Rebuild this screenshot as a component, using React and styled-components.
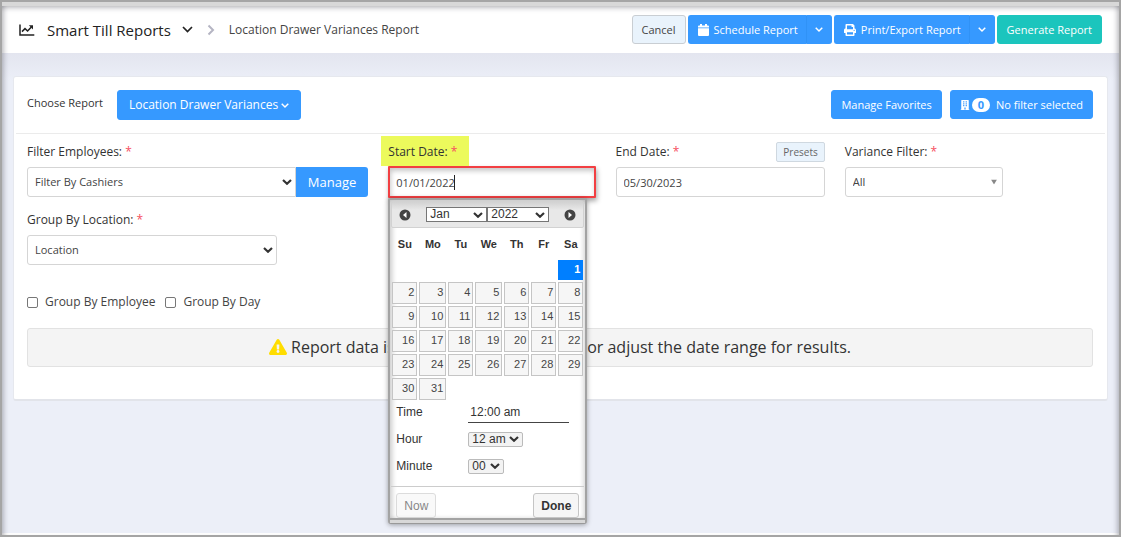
import React from "react";
import styled, { createGlobalStyle, css } from "styled-components";
import { FaPrint, FaBuilding, FaExclamationTriangle } from "react-icons/fa";

const GlobalStyle = createGlobalStyle`
  *, *::before, *::after { box-sizing: border-box; }
  body {
    margin: 0;
    font-family: "Open Sans", sans-serif;
    font-size: 12px;
    line-height: 20px;
    color: #333;
    background: #fff;
  }
  button, input, select { font: inherit; color: inherit; margin: 0; }
`;

const Page = styled.div`
  position: relative;
  display: flex;
  flex-direction: column;
  min-height: 100vh;
  padding-bottom: 2px;
  border: 2px solid #a5a5a5;
  background: #fff;
  &::after {
    content: "";
    position: absolute;
    inset: 4px 0 0;
    box-shadow:
      inset 6px 0 5px -4px rgba(90, 90, 100, 0.4),
      inset -6px 0 5px -4px rgba(90, 90, 100, 0.4),
      inset 0 6px 5px -4px rgba(90, 90, 100, 0.4);
    pointer-events: none;
  }
`;

const Header = styled.header`
  display: flex;
  align-items: center;
  justify-content: space-between;
  height: 51px;
  padding: 0 17px 0 17px;
  border-top: 4px solid #d8d8d8;
  background: #fff;
`;

const Trail = styled.nav`
  display: flex;
  align-items: center;
`;

const Title = styled.h1`
  margin: 0 11px 0 12px;
  font-size: 15px;
  font-weight: 400;
  color: #222;
`;

const Crumb = styled.span`
  display: flex;
  margin-left: 14px;
  color: #444;
`;

const Actions = styled.div`
  display: flex;
  gap: ${(p) => p.$gap || 2}px;
`;

const tones = {
  blue: css`background: #3699ff; border-color: #3699ff; color: #fff;`,
  teal: css`background: #1bc5bd; border-color: #1bc5bd; color: #fff;`,
  pale: css`background: #e9f3fc; border-color: #c9ced3; color: #444;`,
};

const Button = styled.button`
  display: inline-flex;
  align-items: center;
  justify-content: center;
  height: ${(p) => (p.$large ? 30 : 29)}px;
  padding: 0 ${(p) => (p.$large ? 11 : 9)}px;
  border: 1px solid;
  border-radius: 3px;
  font-size: ${(p) => (p.$large ? 12 : 11)}px;
  white-space: nowrap;
  cursor: pointer;
  ${(p) => tones[p.$tone || "blue"]}
`;

const Split = styled.div`
  display: flex;
  ${Button}:first-child { border-radius: 3px 0 0 3px; border-right: 0; gap: 5px; padding-right: 8px; }
  ${Button}:last-child { border-radius: 0 3px 3px 0; border-left-color: #3092f6; padding: 0 8px; }
`;

const Main = styled.main`
  flex: 1;
  padding: 23px 11px;
  background: linear-gradient(#e3e5ef, #eceff8 28px);
`;

const Card = styled.section`
  padding-bottom: 32px;
  border: 1px solid #e6e8ee;
  border-bottom: 2px solid #e2e4ea;
  border-radius: 3px;
  background: #fff;
`;

const ChooseRow = styled.div`
  display: flex;
  align-items: flex-start;
  justify-content: space-between;
  margin: 0 2px;
  padding: 13px 12px 13px 11px;
  border-bottom: 1px solid #ebebeb;
`;

const Choose = styled.div`
  display: flex;
  align-items: center;
  gap: 14px;
`;

const ChooseLabel = styled.span`
  margin-bottom: 4px;
  font-size: 11px;
`;

const Count = styled.span`
  margin: 0 6px 0 2px;
  padding: 0 6px;
  border-radius: 7px;
  background: #fff;
  color: #3699ff;
  font-size: 11px;
  font-weight: 700;
  line-height: 14px;
`;

const Filters = styled.form`
  padding: 8px 14px 0 13px;
`;

const FieldGrid = styled.div`
  display: grid;
  grid-template-columns: 341fr 207fr 209fr 248fr;
  gap: 13px 20px;
`;

const Field = styled.div`
  position: relative;
  min-width: 0;
  max-width: ${(p) => p.$max || "none"};
`;

const LabelRow = styled.div`
  display: flex;
  align-items: center;
  justify-content: space-between;
  height: 20px;
  margin-bottom: 5px;
`;

const Label = styled.label`
  position: relative;
  z-index: 0;
  font-size: 12px;
  &::after { content: " *"; color: #f64e60; }
  ${(p) => p.$marked && css`
    &::before {
      content: "";
      position: absolute;
      z-index: -1;
      inset: -6px -12px -4px -7px;
      background: #ecfa5c;
    }
  `}
`;

const Presets = styled.button`
  height: 20px;
  padding: 0 6px;
  border: 1px solid #cfd8e0;
  border-radius: 2px;
  background: #e9f3fc;
  color: #666;
  font-size: 10px;
  line-height: 16px;
`;

const control = css`
  width: 100%;
  height: 30px;
  padding: 0 7px;
  border: 1px solid #d5d5d5;
  border-radius: 3px;
  background: #fff;
  color: #444;
  font-size: 11px;
`;

const TextInput = styled.input`
  ${control}
  outline: 0;
  ${(p) => p.$active && css`
    height: 32px;
    margin: -1px 0;
    padding: 0 6px;
    border: 2px solid #f23f42;
    border-radius: 1px;
    box-shadow: 1px 3px 5px rgba(0, 0, 0, 0.35), inset 1px 3px 5px rgba(0, 0, 0, 0.22);
  `}
`;

const Caret = styled.span`
  position: absolute;
  left: 66px;
  top: 33px;
  width: 1px;
  height: 15px;
  background: #222;
`;

const SelectBox = styled.div`
  position: relative;
  flex: ${(p) => (p.$grow ? 1 : "none")};
  svg {
    position: absolute;
    right: ${(p) => p.$inset || 4}px;
    top: 50%;
    transform: translateY(-50%);
    pointer-events: none;
  }
`;

const Select = styled.select`
  ${control}
  appearance: none;
  border-radius: ${(p) => (p.$joined ? "3px 0 0 3px" : "3px")};
`;

const InputGroup = styled.div`
  display: flex;
`;

const Manage = styled.button`
  height: 30px;
  padding: 0 12px;
  border: 0;
  border-radius: 0 3px 3px 0;
  background: #3699ff;
  color: #fff;
  font-size: 13px;
`;

const Checks = styled.div`
  display: flex;
  gap: 10px;
  margin: 27px 0 16px;
`;

const Check = styled.label`
  display: flex;
  align-items: center;
  gap: 7px;
  color: #444;
  input {
    appearance: none;
    width: 11px;
    height: 11px;
    border: 1px solid #777;
    border-radius: 2px;
    background: #fff;
  }
`;

const Alert = styled.div`
  display: flex;
  align-items: center;
  justify-content: center;
  gap: 4px;
  height: 39px;
  padding-bottom: 2px;
  border: 1px solid #e2e2e2;
  border-radius: 3px;
  background: #f4f4f4;
  color: #333;
  font-size: 16px;
  white-space: nowrap;
`;

const Picker = styled.div`
  position: absolute;
  z-index: 2;
  top: 56px;
  left: 0;
  width: 199px;
  border: 2px solid #a3a3a3;
  border-bottom: 1px solid #999;
  border-radius: 2px 2px 3px 3px;
  background: #fff;
  box-shadow: 0 1px 5px rgba(0, 0, 0, 0.35);
  font-family: "Liberation Sans", sans-serif;
  color: #333;
`;

const PickerBody = styled.div`
  padding: 1px 1px 0;
  border-bottom: 2px solid #a3a3a3;
  box-shadow: inset 3px 3px 4px rgba(0, 0, 0, 0.16), inset -2px 0 4px rgba(0, 0, 0, 0.14);
`;

const PickerLip = styled.div`
  height: 3px;
  background: #d8d8d8;
`;

const PickerHead = styled.div`
  display: flex;
  align-items: center;
  justify-content: space-between;
  height: 27px;
  padding: 0 7px;
  border: 1px solid #d2d2d2;
  border-radius: 2px;
  background: linear-gradient(#d2d2d2, #e8e8e8 8px);
`;

const RoundButton = styled.button`
  display: grid;
  place-items: center;
  padding: 0;
  border: 0;
  background: none;
`;

const MonthYear = styled.div`
  display: flex;
`;

const MiniSelect = styled.select`
  appearance: none;
  display: block;
  width: ${(p) => p.$width}px;
  height: 15px;
  padding: 0 3px;
  border: 1px solid #767676;
  border-radius: ${(p) => (p.$round ? "2px" : "0")};
  background: #fff;
  font-size: 12px;
  line-height: 13px;
  ${(p) => p.$round && css`border-color: #bbb; background: #f3f3f3;`}
`;

const Calendar = styled.table`
  width: 100%;
  table-layout: fixed;
  border-collapse: collapse;
  font-size: 11px;
  th { height: 31px; padding: 0; line-height: 12px; }
  td { padding: 1px; }
`;

const Day = styled.button`
  display: block;
  width: 100%;
  height: ${(p) => (p.$on ? 20 : 22)}px;
  padding: 0 2px 2px 0;
  border: 1px solid ${(p) => (p.$on ? "#007fff" : "#c5c5c5")};
  background: ${(p) => (p.$on ? "#007fff" : "#f6f6f6")};
  color: ${(p) => (p.$on ? "#fff" : "#454545")};
  font-weight: ${(p) => (p.$on ? 700 : 400)};
  font-size: 11px;
  line-height: 16px;
  text-align: right;
`;

const TimeGrid = styled.div`
  display: grid;
  grid-template-columns: 64px 101px;
  column-gap: 8px;
  align-items: center;
  grid-template-rows: 22px 32px 22px;
  padding: 0 5px 9px;
  font-size: 12px;
`;

const TimeInput = styled.input`
  width: 100%;
  height: 22px;
  padding: 0 2px;
  border: 0;
  border-bottom: 1px solid #444;
  outline: 0;
  background: none;
`;

const PickerFoot = styled.div`
  display: flex;
  justify-content: space-between;
  padding: 6px 5px 0;
  border-top: 1px solid #ccc;
`;

const FootButton = styled.button`
  height: 25px;
  padding: 0 7px;
  border: 1px solid #c5c5c5;
  border-radius: 3px;
  background: #f6f6f6;
  font-size: 12px;
  font-weight: ${(p) => (p.$strong ? 700 : 400)};
  opacity: ${(p) => (p.disabled ? 0.6 : 1)};
`;

const Chevron = ({ width = 11, stroke = 2, color = "#333", right }) => (
  <svg
    width={right ? 8 : width}
    height={right ? 12 : 7}
    viewBox={right ? "0 0 8 12" : "0 0 11 7"}
    fill="none"
    stroke={color}
    strokeWidth={stroke}
    aria-hidden="true"
  >
    <path d={right ? "M1.5 1.5 6 6 1.5 10.5" : "M1 1 5.5 5.5 10 1"} />
  </svg>
);

const TrendIcon = () => (
  <svg width="16" height="12" viewBox="0 0 16 12" fill="none" stroke="#222" aria-hidden="true">
    <path d="M1 0.5V10.9H15.3" strokeWidth="1.5" />
    <path d="M3 7.6 6 4.6 8.6 7 12.4 3" strokeWidth="1.5" />
    <path d="M9.8 1.2H14V5.4z" fill="#222" stroke="none" />
  </svg>
);

const SelectArrow = () => (
  <svg width="10" height="7" viewBox="0 0 10 7" fill="none" stroke="#333" strokeWidth="2.2" aria-hidden="true">
    <path d="M1 1.5 5 5.2 9 1.5" />
  </svg>
);

const CalendarIcon = () => (
  <svg width="11" height="12" viewBox="0 0 11 12" fill="#fff" aria-hidden="true">
    <path d="M2 0h2v1.5h3V0h2v1.5h1a1 1 0 0 1 1 1V3.6H0V2.5a1 1 0 0 1 1-1h1zM0 4.2h11V11a1 1 0 0 1-1 1H1a1 1 0 0 1-1-1z" />
  </svg>
);

const ArrowDot = ({ next }) => (
  <svg width="12" height="12" viewBox="0 0 12 12" aria-hidden="true">
    <circle cx="6" cy="6" r="5.5" fill="#444" />
    <path d={next ? "M4.5 3v6L8 6z" : "M7.5 3v6L4 6z"} fill="#fff" />
  </svg>
);

const DropArrow = () => (
  <svg width="6" height="5" viewBox="0 0 6 5" aria-hidden="true">
    <path d="M0 0h6L3 5z" fill="#888" />
  </svg>
);

const weekdays = ["Su", "Mo", "Tu", "We", "Th", "Fr", "Sa"];
const columns = [27, 29, 27, 29, 27, 27, 27];
const weeks = [0, 1, 2, 3, 4, 5].map((w) =>
  weekdays.map((_, d) => w * 7 + d - 5).map((n) => (n >= 1 && n <= 31 ? n : null))
);

function DatePicker() {
  return (
    <Picker role="dialog" aria-label="Choose start date">
      <PickerBody>
        <PickerHead>
          <RoundButton type="button" aria-label="Previous month"><ArrowDot /></RoundButton>
          <MonthYear>
            <SelectBox>
              <MiniSelect $width={61} aria-label="Month"><option>Jan</option></MiniSelect>
              <SelectArrow />
            </SelectBox>
            <SelectBox>
              <MiniSelect $width={62} aria-label="Year"><option>2022</option></MiniSelect>
              <SelectArrow />
            </SelectBox>
          </MonthYear>
          <RoundButton type="button" aria-label="Next month"><ArrowDot next /></RoundButton>
        </PickerHead>
        <Calendar>
          <colgroup>{columns.map((w, i) => <col key={i} width={w} />)}</colgroup>
          <thead>
            <tr>{weekdays.map((d) => <th key={d} scope="col">{d}</th>)}</tr>
          </thead>
          <tbody>
            {weeks.map((week, w) => (
              <tr key={w}>
                {week.map((n, d) => (
                  <td key={d}>{n && <Day type="button" $on={n === 1}>{n}</Day>}</td>
                ))}
              </tr>
            ))}
          </tbody>
        </Calendar>
        <TimeGrid>
          <label htmlFor="time">Time</label>
          <TimeInput id="time" defaultValue="12:00 am" />
          <label htmlFor="hour">Hour</label>
          <MonthYear>
            <SelectBox>
              <MiniSelect id="hour" $round $width={55}><option>12 am</option></MiniSelect>
              <SelectArrow />
            </SelectBox>
          </MonthYear>
          <label htmlFor="minute">Minute</label>
          <MonthYear>
            <SelectBox>
              <MiniSelect id="minute" $round $width={36}><option>00</option></MiniSelect>
              <SelectArrow />
            </SelectBox>
          </MonthYear>
        </TimeGrid>
        <PickerFoot>
          <FootButton type="button" disabled>Now</FootButton>
          <FootButton type="button" $strong>Done</FootButton>
        </PickerFoot>
      </PickerBody>
      <PickerLip />
    </Picker>
  );
}

export default function App() {
  return (
    <>
      <GlobalStyle />
      <Page>
        <Header>
          <Trail aria-label="Breadcrumb">
            <TrendIcon />
            <Title>Smart Till Reports</Title>
            <Chevron color="#222" stroke={1.7} />
            <Crumb><Chevron right color="#b5b5c3" /></Crumb>
            <Crumb>Location Drawer Variances Report</Crumb>
          </Trail>
          <Actions>
            <Button type="button" $tone="pale">Cancel</Button>
            <Split>
              <Button type="button"><CalendarIcon />Schedule Report</Button>
              <Button type="button" aria-label="Schedule options"><Chevron width={8} color="#fff" /></Button>
            </Split>
            <Split>
              <Button type="button"><FaPrint size={12} aria-hidden="true" />Print/Export Report</Button>
              <Button type="button" aria-label="Export options"><Chevron width={8} color="#fff" /></Button>
            </Split>
            <Button type="button" $tone="teal">Generate Report</Button>
          </Actions>
        </Header>
        <Main>
          <Card>
            <ChooseRow>
              <Choose>
                <ChooseLabel>Choose Report</ChooseLabel>
                <Button type="button" $large>
                  Location Drawer Variances&nbsp;<Chevron width={8} color="#fff" />
                </Button>
              </Choose>
              <Actions $gap={8}>
                <Button type="button">Manage Favorites</Button>
                <Button type="button">
                  <FaBuilding size={10} aria-hidden="true" />
                  <Count>0</Count>
                  No filter selected
                </Button>
              </Actions>
            </ChooseRow>
            <Filters>
              <FieldGrid>
                <Field>
                  <LabelRow><Label htmlFor="employees">Filter Employees:</Label></LabelRow>
                  <InputGroup>
                    <SelectBox $grow>
                      <Select id="employees" $joined><option>Filter By Cashiers</option></Select>
                      <SelectArrow />
                    </SelectBox>
                    <Manage type="button">Manage</Manage>
                  </InputGroup>
                </Field>
                <Field>
                  <LabelRow><Label htmlFor="start" $marked>Start Date:</Label></LabelRow>
                  <TextInput id="start" $active defaultValue="01/01/2022" />
                  <Caret />
                  <DatePicker />
                </Field>
                <Field>
                  <LabelRow>
                    <Label htmlFor="end">End Date:</Label>
                    <Presets type="button">Presets</Presets>
                  </LabelRow>
                  <TextInput id="end" defaultValue="05/30/2023" />
                </Field>
                <Field $max="158px">
                  <LabelRow><Label htmlFor="variance">Variance Filter:</Label></LabelRow>
                  <SelectBox $inset={6}>
                    <Select id="variance"><option>All</option></Select>
                    <DropArrow />
                  </SelectBox>
                </Field>
                <Field $max="250px">
                  <LabelRow><Label htmlFor="location">Group By Location:</Label></LabelRow>
                  <SelectBox>
                    <Select id="location"><option>Location</option></Select>
                    <SelectArrow />
                  </SelectBox>
                </Field>
              </FieldGrid>
              <Checks>
                <Check><input type="checkbox" />Group By Employee</Check>
                <Check><input type="checkbox" />Group By Day</Check>
              </Checks>
              <Alert role="status">
                <FaExclamationTriangle size={18} color="#ffdd00" aria-hidden="true" />
                <span>Report data is not available. Run report or adjust the date range for results.</span>
              </Alert>
            </Filters>
          </Card>
        </Main>
      </Page>
    </>
  );
}
